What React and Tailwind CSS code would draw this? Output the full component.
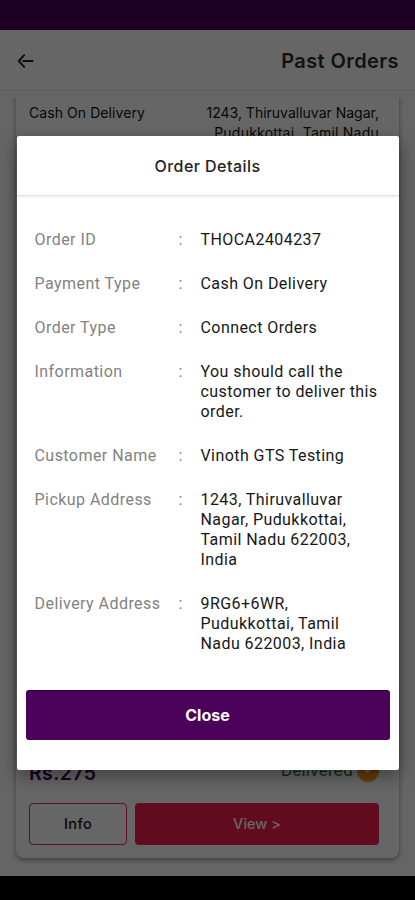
import React from "react";

const details = [
  { label: "Order ID", lines: ["THOCA2404237"] },
  { label: "Payment Type", lines: ["Cash On Delivery"] },
  { label: "Order Type", lines: ["Connect Orders"] },
  { label: "Information", lines: ["You should call the", "customer to deliver this", "order."] },
  { label: "Customer Name", lines: ["Vinoth GTS Testing"] },
  { label: "Pickup Address", lines: ["1243, Thiruvalluvar", "Nagar, Pudukkottai,", "Tamil Nadu 622003,", "India"] },
  { label: "Delivery Address", lines: ["9RG6+6WR,", "Pudukkottai, Tamil", "Nadu 622003, India"] },
];

function OrdersPage() {
  return (
    <div className="flex h-[876px] flex-col bg-[#fcfcfc]">
      <div className="h-[30px] shrink-0 bg-[#4b005a]" />
      <header className="flex h-[61px] shrink-0 items-center justify-between border-b border-[#e6e6e6] bg-white pl-[17px] pr-[16px] pt-[2px]">
        <svg width="17" height="14" viewBox="0 0 17 14" fill="none" stroke="#222" strokeWidth="1.9" strokeLinecap="round" strokeLinejoin="round">
          <path d="M7.2 1.2 1.8 7l5.4 5.8M6.3 7h9.2" />
        </svg>
        <h1 className="text-[20px] font-semibold leading-6 tracking-[0.4px] text-[#2f2f2f]">Past Orders</h1>
      </header>
      <main className="mt-[7px] flex grow flex-col overflow-hidden px-4 pb-[18px]">
        <section className="-mt-[6px] flex grow flex-col rounded-b-lg bg-white px-[13px] pb-[13px] pt-[11px] shadow-[0_2px_5px_rgba(0,0,0,0.4)]">
          <div className="flex justify-between text-[14px] leading-5 text-[#111]">
            <p className="tracking-[0.07px]">Cash On Delivery</p>
            <p className="mr-[7px] text-right">1243, Thiruvalluvar Nagar,<br /><span className="tracking-[0.22px]">Pudukkottai, Tamil Nadu</span></p>
          </div>
          <div className="mt-auto mr-[7px] flex items-center justify-between">
            <strong className="text-[19.5px] font-semibold leading-6 tracking-[0.4px] text-[#3b0060]">Rs.275</strong>
            <span className="flex items-center gap-1 pb-[3px]">
              <span className="text-[15.5px] leading-5 tracking-[0.3px] text-[#126b1b]">Delivered</span>
              <svg width="22" height="22" viewBox="0 0 22 22">
                <defs>
                  <linearGradient id="badge" x1="0" y1="0" x2="0" y2="1">
                    <stop offset="0.4" stopColor="#f2681c" />
                    <stop offset="0.65" stopColor="#fa9c18" />
                  </linearGradient>
                </defs>
                <circle cx="11" cy="11" r="11" fill="url(#badge)" />
                <path d="m7.5 9 2.8 3 4.8-5.4" fill="none" stroke="#fff" strokeWidth="1.5" />
              </svg>
            </span>
          </div>
          <div className="mt-[18px] mr-[7px] flex gap-[8px]">
            <button className="h-[42px] w-[98px] rounded-[4px] border border-[#f02250] text-[14.5px] font-medium tracking-[0.4px] text-[#111]">Info</button>
            <button className="h-[42px] grow rounded-[4px] bg-[#f61b4e] text-[14.5px] font-medium text-white">View &gt;</button>
          </div>
        </section>
      </main>
    </div>
  );
}

function OrderDialog() {
  return (
    <div role="dialog" className="flex h-[634px] w-[382px] flex-col rounded-[2px] bg-white shadow-[0_6px_18px_rgba(0,0,0,0.4)]">
      <h2 className="flex h-[60px] shrink-0 items-center justify-center border-b border-[#e4e4e4] text-[16px] font-medium tracking-[0.45px] text-[#222] shadow-[0_1px_2px_rgba(0,0,0,0.08)]">Order Details</h2>
      <dl className="flex flex-col gap-6 pl-[18px] pt-[34px] font-[Roboto,sans-serif] text-[16px] leading-5">
        {details.map(({ label, lines }) => (
          <div key={label} className="flex">
            <dt className="w-[144px] shrink-0 tracking-[0.45px] text-[#828282]">{label}</dt>
            <span className="w-[22px] shrink-0 text-[#828282]">:</span>
            <dd className="whitespace-nowrap tracking-[0.43px] text-[#171717]">
              {lines.map((line) => <div key={line}>{line}</div>)}
            </dd>
          </div>
        ))}
      </dl>
      <button className="mx-[9px] mb-[30px] mt-auto h-[50px] shrink-0 rounded-[3px] border border-t-[#20003a] border-x-[#4b005a] border-b-[#4b005a] bg-[#4b005a] text-[16px] font-bold text-white">Close</button>
    </div>
  );
}

export default function App() {
  return (
    <div className="relative h-[900px] w-[415px] overflow-hidden bg-black font-[Inter,sans-serif]">
      <OrdersPage />
      <div className="absolute inset-0 flex items-start justify-center bg-black/60 pt-[136px]">
        <OrderDialog />
      </div>
    </div>
  );
}
